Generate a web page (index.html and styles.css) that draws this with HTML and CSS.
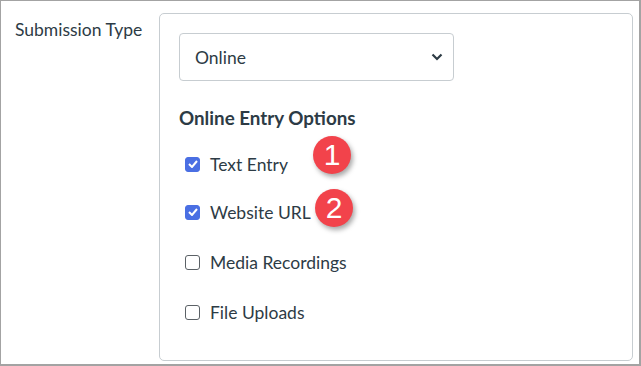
FILE: index.html
```html
<!DOCTYPE html>
<html lang="en">
<head>
    <meta charset="UTF-8">
    <title>Submission Type</title>
    <link rel="stylesheet" href="styles.css">
</head>
<body>
    <div class="frame">
        <div class="field-label">Submission Type</div>
        <div class="card">
            <div class="select">
                <span>Online</span>
                <svg class="chevron" width="12" height="8" viewBox="0 0 12 8"><path d="M1.5 1.5 L6 6 L10.5 1.5" fill="none" stroke="#2d3b45" stroke-width="2.2"/></svg>
            </div>
            <div class="options-title">Online Entry Options</div>
            <div class="options">
                <label class="option"><span class="box checked"><svg width="10" height="8" viewBox="0 0 10 8"><path d="M1 4 L4 7 L9 1" fill="none" stroke="#fff" stroke-width="2"/></svg></span>Text Entry</label>
                <label class="option"><span class="box checked"><svg width="10" height="8" viewBox="0 0 10 8"><path d="M1 4 L4 7 L9 1" fill="none" stroke="#fff" stroke-width="2"/></svg></span>Website URL</label>
                <label class="option"><span class="box"></span>Media Recordings</label>
                <label class="option"><span class="box"></span>File Uploads</label>
                <div class="badge badge-1">1</div>
                <div class="badge badge-2">2</div>
            </div>
        </div>
    </div>
</body>
</html>
```

FILE: styles.css
```css
body { margin: 0; font-family: Lato, "Noto Sans", sans-serif; color: #2d3b45; background: #fff; }
.frame { box-sizing: border-box; width: 641px; height: 366px; border: 1px solid #a3a3a3; border-right-width: 2px; border-bottom-width: 2px; padding: 12px 0 0 14px; display: grid; grid-template-columns: 144px 474px; align-items: start; }
.field-label { font-size: 17.5px; line-height: 20px; padding-top: 7px; }
.card { box-sizing: border-box; height: 348px; border: 1px solid #c7cdd1; border-radius: 5px; padding: 19px 19px; }
.select { box-sizing: border-box; width: 275px; height: 48px; border: 1px solid #c7cdd1; border-radius: 4px; display: flex; align-items: center; justify-content: space-between; padding: 0 10px 0 15px; font-size: 17.5px; }
.options-title { font-weight: bold; font-size: 18.8px; margin-top: 26px; line-height: 22px; }
.options { position: relative; margin-top: 12px; display: flex; flex-direction: column; }
.option { display: flex; align-items: center; height: 50px; font-size: 17.5px; }
.option:first-child { height: 46px; }
.box { box-sizing: border-box; width: 15px; height: 15px; margin: 0 10px 0 6px; border: 1.5px solid #5b6166; border-radius: 3px; display: flex; align-items: center; justify-content: center; background: #fff; }
.box.checked { background: #4a6fe3; border-color: #4a6fe3; }
.badge { position: absolute; width: 38px; height: 38px; border-radius: 50%; background: #f2434b; color: #fff; font-family: "Liberation Sans", Arial, sans-serif; font-size: 30px; line-height: 38px; text-align: center; box-shadow: 2px 3px 5px rgba(0,0,0,0.35); }
.badge-1 { left: 134px; top: -5px; }
.badge-2 { left: 136px; top: 48px; }
```
